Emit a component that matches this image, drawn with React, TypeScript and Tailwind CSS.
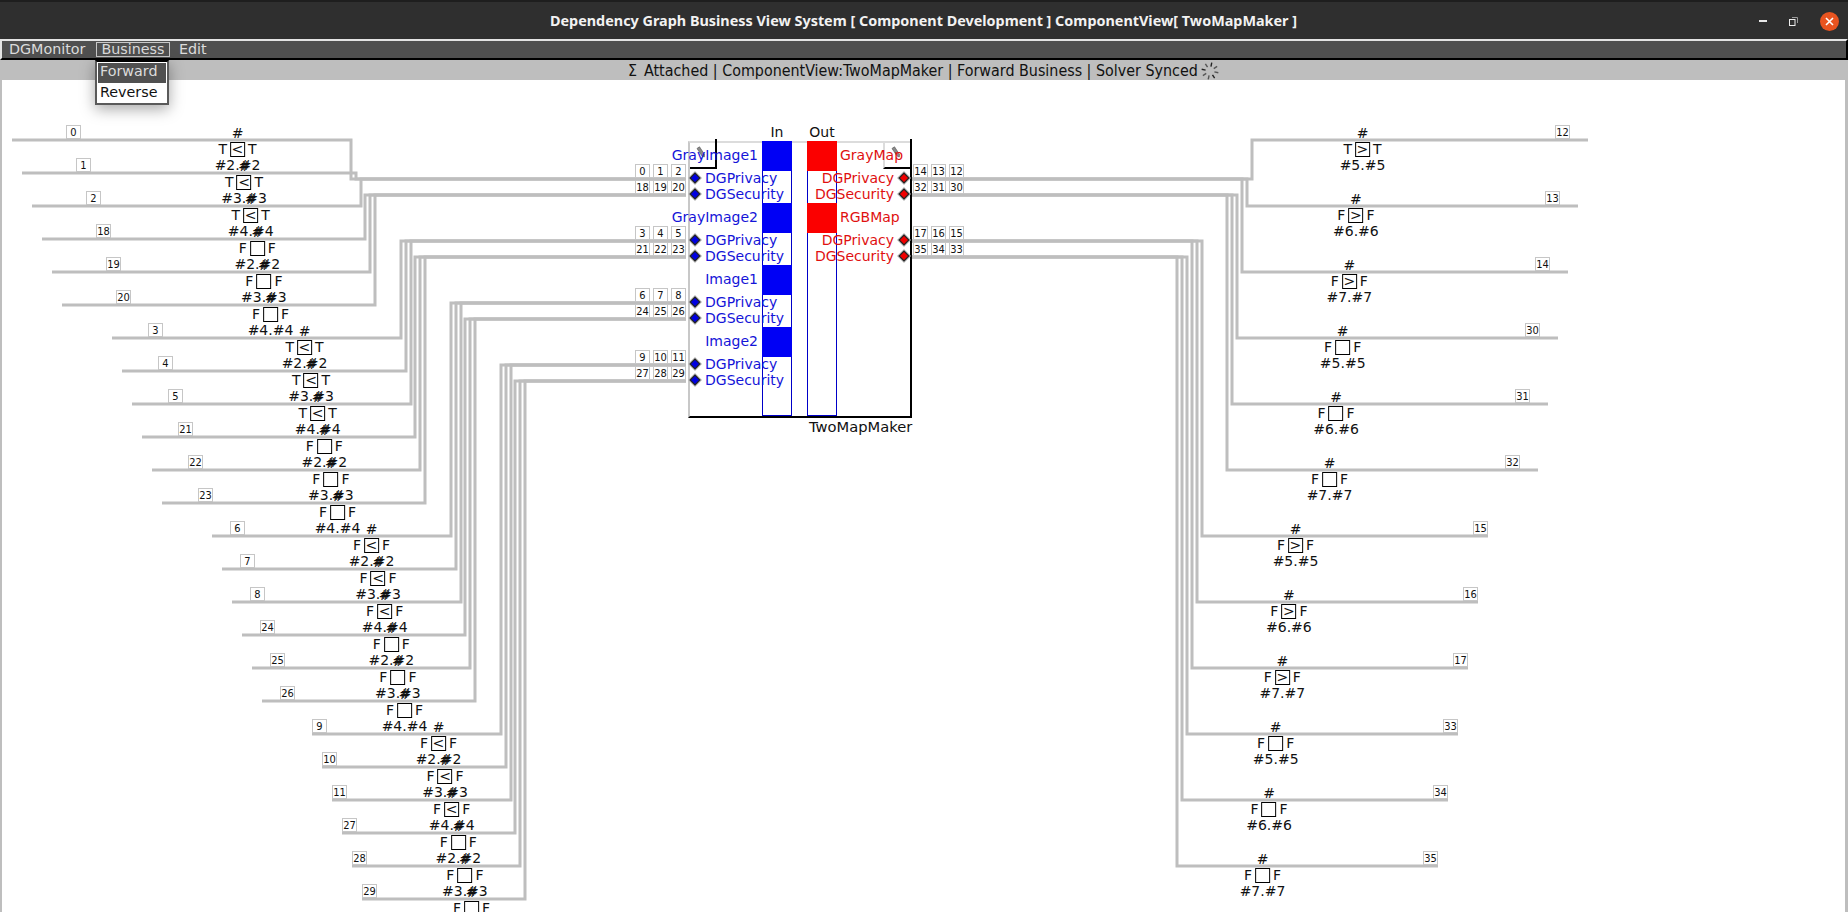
import type { ReactNode } from 'react';

const SANS = "font-['DejaVu_Sans',sans-serif]";
const COND = "font-['DejaVu_Sans_Condensed','DejaVu_Sans',sans-serif]";
const TOP = 80; // canvas starts below the status bar

const WIRE = '#bebebe';

// y of the two wires leaving each pin group
const PORT_Y = [
  [179, 195],
  [241, 257],
  [303, 319],
  [365, 381],
];

const LEFT_IDS = [0, 1, 2, 18, 19, 20, 3, 4, 5, 21, 22, 23, 6, 7, 8, 24, 25, 26, 9, 10, 11, 27, 28, 29];
const RIGHT_IDS = [12, 13, 14, 30, 31, 32, 15, 16, 17, 33, 34, 35];
const PORT_LEFT = [
  [[0, 1, 2], [18, 19, 20]],
  [[3, 4, 5], [21, 22, 23]],
  [[6, 7, 8], [24, 25, 26]],
  [[9, 10, 11], [27, 28, 29]],
];
const PORT_RIGHT = [
  [[14, 13, 12], [32, 31, 30]],
  [[17, 16, 15], [35, 34, 33]],
];

const leftRows = LEFT_IDS.map((id, i) => {
  const g = Math.floor(i / 6);
  const k = i % 6;
  return {
    id,
    y: 140 + 33 * i,
    start: 12 + 100 * g + 10 * k,
    vx: 351 + 50 * g + 5 * k - (k > 2 ? 1 : 0),
    portY: PORT_Y[g][k < 3 ? 0 : 1],
    labelX: 66 + 82 * g + 10 * k,
    boxX: 230 + 67 * g + 6.6 * k,
    val: g < 2 && k < 3 ? 'T' : 'F',
    op: k < 3 ? '<' : '',
    num: 2 + (k % 3),
  };
});

const rightRows = RIGHT_IDS.map((id, i) => {
  const g = Math.floor(i / 6);
  const k = i % 6;
  return {
    id,
    y: 140 + 66 * i,
    end: 1588 - 100 * g - 10 * k,
    vx: 1252 - 50 * g - 5 * k,
    portY: PORT_Y[g][k < 3 ? 0 : 1],
    labelX: 1555 - 82 * g - 10 * k,
    boxX: 1355 - 67 * g - 6.6 * k,
    val: i === 0 ? 'T' : 'F',
    op: k < 3 ? '>' : '',
    num: 5 + (k % 3),
  };
});

const NumBox = ({ n }: { n: number }) => (
  <span className={`flex h-[14px] w-[15px] shrink-0 items-center justify-center border-[1.5px] border-[#c6c6c6] bg-white text-[11px] leading-none text-[#111] ${COND}`}>
    {n}
  </span>
);

const RowLine = ({ children }: { children: ReactNode }) => (
  <div className="flex h-[16px] items-center justify-center gap-[3px] whitespace-nowrap">{children}</div>
);

// one relation on the canvas: the line's label, its "#", compare box and range
const RowNode = ({ boxX, y, val, op, num, id, labelX }: { boxX: number; y: number; val: string; op: string; num: number; id: number; labelX: number }) => (
  <>
    <div
      className={`absolute flex -translate-x-1/2 flex-col items-center text-[14px] leading-none text-[#111] ${SANS}`}
      style={{ left: boxX + 7.5, top: y - 15 - TOP }}
    >
      <RowLine>#</RowLine>
      <RowLine>
        {val}
        <span className="flex h-[15px] w-[15px] items-center justify-center border border-black bg-white">{op}</span>
        {val}
      </RowLine>
      <RowLine>{`#${num}.#${num}`}</RowLine>
    </div>
    <div className="absolute" style={{ left: labelX, top: y - 15 - TOP }}>
      <NumBox n={id} />
    </div>
  </>
);

const Diamond = ({ fill }: { fill: string }) => (
  <svg className="shrink-0" width="14" height="14" viewBox="0 0 14 14">
    <path d="M7 0 L14 7 L7 14 L0 7 Z" fill="#b8b8b8" />
    <path d="M7 1.3 L12.7 7 L7 12.7 L1.3 7 Z" fill="#222" />
    <path d="M7 3 L11 7 L7 11 L3 7 Z" fill={fill} />
  </svg>
);

const Pencil = ({ className }: { className: string }) => (
  <svg className={className} width="10" height="12" viewBox="0 0 10 12">
    <path d="M1 2.5 L3.5 0.8 L8.5 8.5 L8.3 11 L6 10 Z" fill="#8a8a8a" stroke="#5f5f5f" strokeWidth="0.7" />
  </svg>
);

const Spinner = () => (
  <svg className="ml-[2px]" width="20" height="20" viewBox="0 0 20 20">
    {[0, 45, 90, 135, 180, 225, 270, 315].map((a, i) => (
      <line
        key={a}
        x1="10"
        y1="1.5"
        x2="10"
        y2="5.5"
        stroke={i % 3 === 0 ? '#222' : '#555'}
        strokeWidth="1.4"
        transform={`rotate(${a + 12} 10 10)`}
      />
    ))}
  </svg>
);

const Wires = () => (
  <svg className="absolute left-0 top-0" width="1848" height="832" viewBox={`0 ${TOP} 1848 832`} fill="none" stroke={WIRE} strokeWidth="3">
    {leftRows.map((r) => (
      <path key={r.id} d={`M${r.start} ${r.y} H${r.vx} V${r.portY} H686`} />
    ))}
    {rightRows.map((r) => (
      <path key={r.id} d={`M912 ${r.portY} H${r.vx} V${r.y} H${r.end}`} />
    ))}
  </svg>
);

const PortGrid = ({ groups, className }: { groups: number[][][]; className: string }) => (
  <div className={`absolute flex flex-col gap-[32px] ${className}`}>
    {groups.map((group, g) => (
      <div key={g} className="flex flex-col gap-[2px]">
        {group.map((ids, s) => (
          <div key={s} className="flex gap-[3px]">
            {ids.map((n) => (
              <NumBox key={n} n={n} />
            ))}
          </div>
        ))}
      </div>
    ))}
  </div>
);

const PinGroup = ({ name, side }: { name: string; side: 'in' | 'out' }) =>
  side === 'in' ? (
    <div className="flex h-[62px] flex-col text-[#1414d8]">
      <div className="flex h-[14px] w-[70px] items-center justify-end whitespace-nowrap">{name}</div>
      <div className="mt-[9px] flex flex-col gap-[2px]">
        <div className="flex h-[14px] items-center gap-[3px]">
          <Diamond fill="#0000e0" />
          DGPrivacy
        </div>
        <div className="flex h-[14px] items-center gap-[3px]">
          <Diamond fill="#0000e0" />
          DGSecurity
        </div>
      </div>
    </div>
  ) : (
    <div className="flex h-[62px] flex-col text-[#e01010]">
      <div className="flex h-[14px] items-center whitespace-nowrap pl-[40px]">{name}</div>
      <div className="mt-[9px] flex flex-col gap-[2px]">
        <div className="flex h-[14px] items-center justify-end gap-[3px]">
          DGPrivacy
          <Diamond fill="#f00000" />
        </div>
        <div className="flex h-[14px] items-center justify-end gap-[3px]">
          DGSecurity
          <Diamond fill="#f00000" />
        </div>
      </div>
    </div>
  );

const BarColumn = ({ className, fill, count }: { className: string; fill: string; count: number }) => (
  <div className={`absolute top-[61px] flex h-[275px] w-[30px] flex-col gap-[32px] border border-[#0000c8] bg-white ${className}`}>
    {Array.from({ length: count }, (_, i) => (
      <div key={i} className={`-mx-[1px] h-[30px] shrink-0 ${i === 0 ? '-mt-[1px]' : ''} ${fill}`} />
    ))}
  </div>
);

const TwoMapMaker = () => (
  <>
    <div className="absolute left-[688px] top-[61px] h-[277px] w-[224px] border-2 border-b-black border-l-[#c8c8c8] border-r-black border-t-[#dcdcdc] bg-white" />
    <BarColumn className="left-[762px]" fill="bg-[#0000f5]" count={4} />
    <BarColumn className="left-[807px]" fill="bg-[#fb0000]" count={2} />

    {/* corner handles */}
    <div className="absolute left-[690px] top-[59px] h-[30px] w-[27px] border-b-2 border-r-2 border-black" />
    <div className="absolute left-[883px] top-[61px] h-[28px] w-[28px] border-b-2 border-l-2 border-b-black border-l-[#dcdcdc]" />
    <div className="absolute left-[910px] top-[59px] h-[4px] w-[2px] bg-black" />
    <Pencil className="absolute left-[696px] top-[66px]" />
    <Pencil className="absolute left-[891px] top-[66px]" />

    <div className={`absolute left-[762px] top-[45px] flex w-[75px] justify-between text-[14px] leading-[14px] text-[#111] ${SANS}`}>
      <span className="w-[30px] text-center">In</span>
      <span className="w-[30px] whitespace-nowrap text-center">Out</span>
    </div>
    <div className={`absolute left-[809px] top-[340px] text-[14.7px] leading-[14px] text-[#111] ${SANS}`}>TwoMapMaker</div>

    <div className={`absolute left-[688px] top-[68px] flex flex-col text-[14px] leading-none ${SANS}`}>
      {['GrayImage1', 'GrayImage2', 'Image1', 'Image2'].map((name) => (
        <PinGroup key={name} name={name} side="in" />
      ))}
    </div>
    <div className={`absolute left-[800px] top-[68px] flex w-[111px] flex-col text-[14px] leading-none ${SANS}`}>
      {['GrayMap', 'RGBMap'].map((name) => (
        <PinGroup key={name} name={name} side="out" />
      ))}
    </div>

    <PortGrid groups={PORT_LEFT} className="left-[635px] top-[84px]" />
    <PortGrid groups={PORT_RIGHT} className="left-[913px] top-[84px]" />
  </>
);

export default function App() {
  return (
    <div className={`relative flex h-[912px] w-[1848px] flex-col overflow-hidden bg-[#bebebe] ${SANS}`}>
      {/* window title bar */}
      <div className="flex h-[39px] shrink-0 items-center border-t-2 border-[#1e1e1e] bg-[#2f2f2f] pt-[1px]">
        <div className="flex-1 pl-[8px] text-center font-['Noto_Sans',sans-serif] text-[14.4px] font-bold text-[#f2f2f2]">
          Dependency Graph Business View System [ Component Development ] ComponentView[ TwoMapMaker ]
        </div>
        <div className="flex w-0 items-center justify-end gap-[22px] pr-[9px]">
          <div className="h-[2px] w-[8px] shrink-0 bg-[#e8e8e8]" />
          <svg className="shrink-0" width="9" height="9" viewBox="0 0 9 9" fill="none">
            <path d="M3 0.5 H8.5 V6" stroke="#9a9a9a" />
            <rect x="0.5" y="2.5" width="5.5" height="6" stroke="#eee" />
          </svg>
          <div className="flex h-[19px] w-[19px] shrink-0 items-center justify-center rounded-full bg-[#e95420]">
            <svg width="9" height="9" viewBox="0 0 9 9" stroke="#fff" strokeWidth="1.6">
              <path d="M1 1 L8 8 M8 1 L1 8" />
            </svg>
          </div>
        </div>
      </div>

      {/* menu bar */}
      <div className="flex h-[21px] shrink-0 items-center gap-[1px] border-y-2 border-l-2 border-r-2 border-b-black border-l-[#e4e4e4] border-r-black border-t-[#e4e4e4] bg-[#505050] pl-[7px] text-[14.3px] leading-none text-[#dcdcdc]">
        <span className="w-[86px]">DGMonitor</span>
        <span className="flex h-[15px] w-[74px] items-center justify-center border border-[#c8c8c8]">Business</span>
        <span className="ml-[8px]">Edit</span>
      </div>

      {/* status bar */}
      <div className={`flex h-[20px] shrink-0 items-center bg-[#bebebe] pl-[628px] pt-[1px] text-[15.9px] leading-none text-[#111] ${COND}`}>
        <span className="w-[16px]">Σ</span>
        <span>Attached | ComponentView:TwoMapMaker | Forward Business | Solver Synced</span>
        <Spinner />
      </div>

      {/* canvas */}
      <div className="relative flex-1 overflow-hidden border-l-2 border-r-[3px] border-[#bebebe] bg-white">
        <div className="absolute left-[-2px] top-0 h-[832px] w-[1848px]">
          <Wires />
          {leftRows.map((r) => (
            <RowNode key={r.id} {...r} />
          ))}
          {rightRows.map((r) => (
            <RowNode key={r.id} {...r} />
          ))}
          <TwoMapMaker />
        </div>
      </div>

      {/* open Business menu */}
      <div className={`absolute left-[95px] top-[60px] z-10 w-[74px] border-2 border-[#5a5a5a] border-t-black bg-white p-[1px] text-[14.3px] leading-none shadow-[0_4px_14px_rgba(0,0,0,0.35)] ${SANS}`}>
        <div className="flex h-[20px] items-center bg-[#505050] pb-[3px] pl-[2px] text-[#dcdcdc]">Forward</div>
        <div className="flex h-[19px] items-center bg-white pl-[2px] text-[#111]">Reverse</div>
      </div>
    </div>
  );
}
